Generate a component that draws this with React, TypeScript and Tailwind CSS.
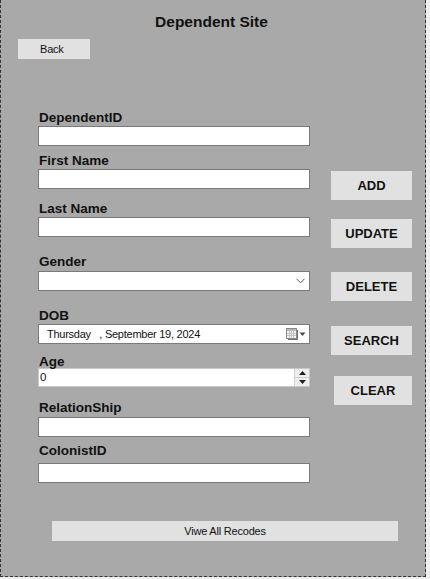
const fields = [
  { label: 'DependentID', wrap: 'mt-0', input: 'mt-0 h-[20px]', kind: 'text' },
  { label: 'First Name', wrap: 'mt-[7px]', input: 'mt-0 h-[20px]', kind: 'text' },
  { label: 'Last Name', wrap: 'mt-[12px]', input: 'mt-0 h-[20px]', kind: 'text' },
  { label: 'Gender', wrap: 'mt-[17px]', input: 'mt-[1px] h-[20px]', kind: 'select' },
  { label: 'DOB', wrap: 'mt-[17px]', input: 'mt-0 h-[20px]', kind: 'date' },
  { label: 'Age', wrap: 'mt-[10px]', input: '-mt-[2px] h-[19px]', kind: 'number' },
  { label: 'RelationShip', wrap: 'mt-[13px]', input: 'mt-[1px] h-[20px]', kind: 'text' },
  { label: 'ColonistID', wrap: 'mt-[6px]', input: 'mt-[4px] h-[20px]', kind: 'text' },
];

const actions = [
  { label: 'ADD', cls: 'mt-[61px] w-[81px]' },
  { label: 'UPDATE', cls: 'mt-[19px] w-[81px]' },
  { label: 'DELETE', cls: 'mt-[24px] w-[81px]' },
  { label: 'SEARCH', cls: 'mt-[25px] w-[81px]' },
  { label: 'CLEAR', cls: 'mt-[21px] ml-[3px] w-[78px]' },
];

function CalendarIcon() {
  return (
    <svg width="20" height="12" viewBox="0 0 20 12">
      <rect x="0.5" y="0.5" width="10" height="10" fill="#f4f4f4" stroke="#8a8a8a" />
      <rect x="1" y="1" width="9" height="2" fill="#b8b8b8" />
      <path d="M1 5.5h9M1 7.5h9M3.5 3v7M5.5 3v7M7.5 3v7" stroke="#c4c4c4" strokeWidth="1" />
      <path d="M2 11.5h9.5V2" stroke="#6f6f6f" fill="none" />
      <path d="M13.5 4.5h6l-3 3.5z" fill="#4a4a4a" />
    </svg>
  );
}

function Field({ f }: { f: (typeof fields)[number] }) {
  const box = `${f.input} w-[272px] bg-white border border-[#7a7a7a] flex items-center`;
  return (
    <div className={f.wrap}>
      <div className="h-[16px] leading-[16px] text-[13.5px] font-bold text-[#111] pl-[1px]">{f.label}</div>
      {f.kind === 'text' && <div className={box} />}
      {f.kind === 'select' && (
        <div className={`${box} justify-end pr-[4px]`}>
          <svg width="9" height="6" viewBox="0 0 9 6">
            <path d="M0.5 0.8L4.5 4.8L8.5 0.8" stroke="#555" fill="none" strokeWidth="1" />
          </svg>
        </div>
      )}
      {f.kind === 'date' && (
        <div className={`${box} justify-between pl-[8px] pr-[3px]`}>
          <span className="text-[11px] tracking-[-0.25px] text-[#111] whitespace-pre">Thursday   , September 19, 2024</span>
          <CalendarIcon />
        </div>
      )}
      {f.kind === 'number' && (
        <div className={`${box} justify-between pl-[1px] border-[#c8c8c8]`}>
          <span className="text-[11.5px] text-[#111]">0</span>
          <div className="flex flex-col h-full w-[15px] border-l border-[#d0d0d0]">
            <div className="flex-1 flex items-center justify-center bg-[#efefef] border-b border-[#cfcfcf]">
              <svg width="7" height="4" viewBox="0 0 7 4"><path d="M0 4h7L3.5 0z" fill="#222" /></svg>
            </div>
            <div className="flex-1 flex items-center justify-center bg-[#efefef]">
              <svg width="7" height="4" viewBox="0 0 7 4"><path d="M0 0h7L3.5 4z" fill="#222" /></svg>
            </div>
          </div>
        </div>
      )}
    </div>
  );
}

export default function App() {
  return (
    <div className="w-[430px] h-[579px] bg-[#f0f0f0] font-['Liberation_Sans',Arial,sans-serif]">
      <div className="w-[426px] h-[577px] bg-[#a9a9a9] border-l border-r border-b border-dashed border-[#333] flex flex-col">
        <h1 className="mt-[13px] h-[18px] leading-[18px] text-center text-[15.5px] font-bold text-[#111] pr-[3px]">
          Dependent Site
        </h1>
        <button className="mt-[8px] ml-[17px] w-[72px] h-[20px] bg-[#e1e1e1] text-[11px] tracking-[-0.2px] text-[#111] text-left pl-[22px]">
          Back
        </button>

        <div className="mt-[51px] flex items-start">
          <div className="ml-[37px] w-[272px] flex flex-col">
            {fields.map((f) => (
              <Field key={f.label} f={f} />
            ))}
          </div>
          <div className="ml-[21px] flex flex-col">
            {actions.map((a) => (
              <button
                key={a.label}
                className={`${a.cls} h-[29px] bg-[#e1e1e1] text-[13px] font-bold text-[#111]`}
              >
                {a.label}
              </button>
            ))}
          </div>
        </div>

        <button className="mt-[38px] ml-[51px] w-[346px] h-[20px] bg-[#e1e1e1] text-[11px] tracking-[-0.2px] text-[#111]">
          Viwe All Recodes
        </button>
      </div>
    </div>
  );
}
